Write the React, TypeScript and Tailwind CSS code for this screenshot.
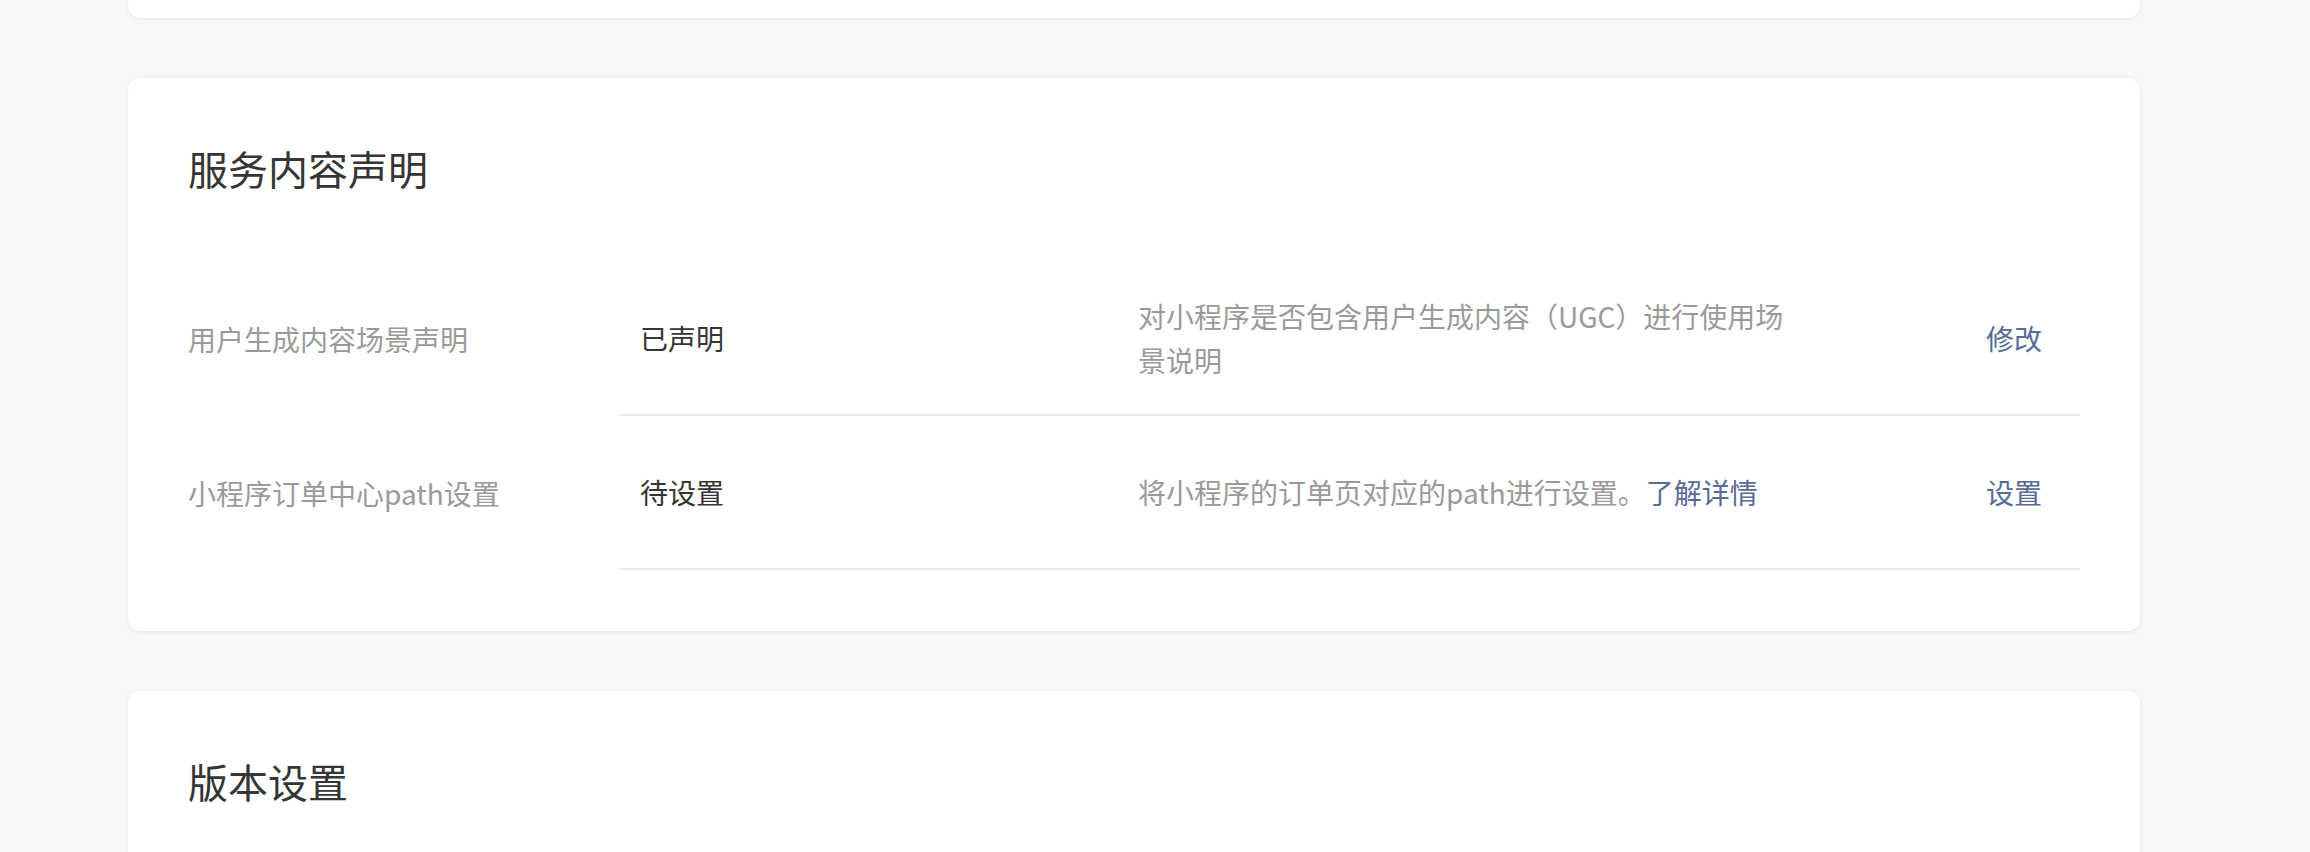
interface SettingRow {
    label: string;
    value: string;
    desc: string;
    link?: string;
    action: string;
}

const rows: SettingRow[] = [
    {
        label: "用户生成内容场景声明",
        value: "已声明",
        desc: "对小程序是否包含用户生成内容（UGC）进行使用场景说明",
        action: "修改",
    },
    {
        label: "小程序订单中心path设置",
        value: "待设置",
        desc: "将小程序的订单页对应的path进行设置。",
        link: "了解详情",
        action: "设置",
    },
];

const fontStack = "font-['Noto_Sans_CJK_SC','Noto_Sans',sans-serif]";

/**
 * One row of the declaration table.
 */
const Row = ({ row }: { row: SettingRow }) => {
    return (
        <div className="flex items-stretch">
            <div className="w-[431px] shrink-0 flex items-center text-[28px] text-[#9a9a9a]">
                {row.label}
            </div>
            <div className="flex-1 flex items-center h-[154px] border-b-2 border-[#e9e9ed]">
                <div className="w-[501px] shrink-0 pl-[21px] text-[28px] text-[#353535]">
                    {row.value}
                </div>
                <div className="w-[700px] shrink-0 pl-[18px] pr-[22px] text-[28px] leading-[44px] text-[#9a9a9a]">
                    {row.desc}
                    {row.link && <a className="text-[#576b95] cursor-pointer">{row.link}</a>}
                </div>
                <div className="flex-1 text-right pr-[38px] text-[28px] text-[#576b95] cursor-pointer">
                    {row.action}
                </div>
            </div>
        </div>
    );
};

const Card = ({ title, children }: { title: string; children?: React.ReactNode }) => {
    return (
        <div className="bg-white rounded-[12px] shadow-[0_1px_4px_rgba(0,0,0,0.08)] px-[60px] pt-[61px] pb-[61px]">
            <h2 className="text-[40px] leading-[58px] font-normal text-[#353535]">{title}</h2>
            {children}
        </div>
    );
};

export default function App() {
    return (
        <div className={`w-full h-[852px] overflow-hidden bg-[#f6f7f9] ${fontStack}`}>
            <div className="ml-[128px] w-[2012px] flex flex-col gap-[60px]">
                <div className="h-[18px] bg-white rounded-b-[12px] shadow-[0_1px_4px_rgba(0,0,0,0.08)]" />
                <Card title="服务内容声明">
                    <div className="mt-[65px]">
                        {rows.map((row, index) => (
                            <Row key={index} row={row} />
                        ))}
                    </div>
                </Card>
                <Card title="版本设置">
                    <div className="h-[200px]" />
                </Card>
            </div>
        </div>
    );
}
